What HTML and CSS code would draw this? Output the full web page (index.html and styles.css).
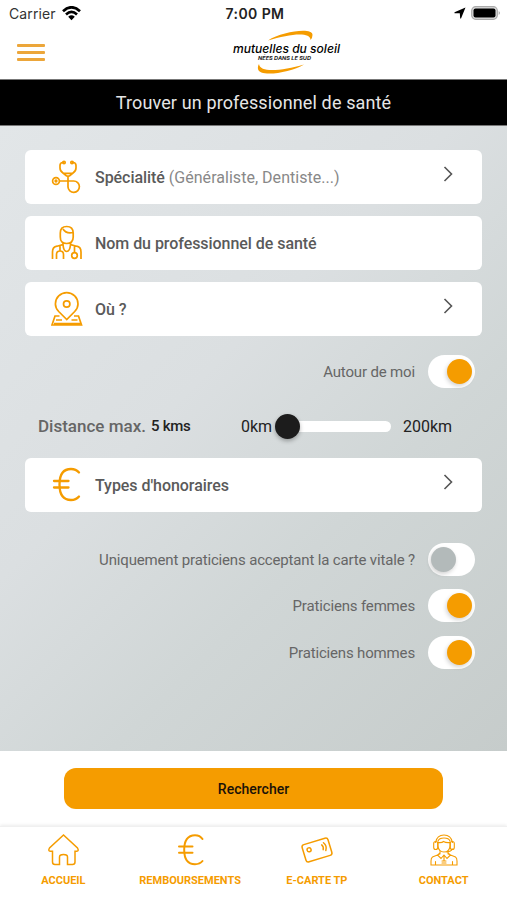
FILE: index.html
```
<!DOCTYPE html>
<html lang="fr">
<head>
    <meta charset="UTF-8">
    <title>Trouver un professionnel de santé</title>
    <link rel="stylesheet" href="styles.css">
</head>
<body>
<div class="status">
    <div class="carrier">
        <span>Carrier</span>
        <svg width="19" height="15" viewBox="0 0 19 15">
            <path d="M1 5.2Q9.5 -2.6 18 5.2M4 8.4Q9.5 3.4 15 8.4" fill="none" stroke="#000" stroke-width="2.7"/>
            <path d="M6.2 10.7Q9.5 7.8 12.8 10.7L9.5 14.2z"/>
        </svg>
    </div>
    <span class="time">7:00 PM</span>
    <div class="battery">
        <svg width="12" height="12" viewBox="0 0 12 12"><path d="M11.5 .5L.5 5.2L.5 6.2L5.8 6.2L6.2 11.5H7z"/></svg>
        <svg width="30" height="14" viewBox="0 0 30 14">
            <rect x=".7" y=".7" width="25.6" height="12.6" rx="4" fill="#ddd" stroke="#aaa" stroke-width="1.2"/>
            <rect x="2.5" y="2.500" width="22" height="9" rx="2"/>
            <path d="M27.7 5Q30.2 7 27.7 9z" fill="#aaa"/>
        </svg>
    </div>
</div>

<header class="header">
    <div class="menu">
        <span></span>
        <span></span>
        <span></span>
    </div>
    <svg class="logo" width="110" height="46" viewBox="0 0 110 46">
        <path d="M37 12.500C51 3.500 82 -1 81.500 7Q81.500 10 79.500 12C80 3.500 59 5.500 37 12.500z" fill="#f59c00"/>
        <path d="M73 36.500C59 45 28 49.500 27 41Q26.500 38 28 36C29 45.500 52 42.500 73 36.500z" fill="#f59c00"/>
        <text class="logo-name" x="2" y="24.500" textLength="107" lengthAdjust="spacingAndGlyphs">mutuelles du soleil</text>
        <text class="logo-sub" x="27" y="32" textLength="53" lengthAdjust="spacingAndGlyphs">NÉES DANS LE SUD</text>
    </svg>
</header>

<h1 class="title">Trouver un professionnel de santé</h1>

<main class="main">
    <div class="card">
        <svg class="icon" width="32" height="36" viewBox="0 0 32 36">
            <path d="M13 3.500H12Q9 3.500 9 6.500V9Q9 12 12 14L15.500 17H18.500L22 14Q25 12 25 9V6.500Q25 3.500 22 3.500H21M12 14.300H22M17 17V28A5.700 5.700 0 1 0 22.700 22H9"/>
            <circle cx="13" cy="3.500" r="1.200"/>
            <circle cx="21" cy="3.500" r="1.200"/>
            <circle cx="5" cy="22" r="3.400"/>
            <circle cx="5" cy="22" r=".8"/>
        </svg>
        <p>Spécialité <span>(Généraliste, Dentiste...)</span></p>
        <svg class="arrow" width="10" height="16" viewBox="0 0 10 16"><path d="M1.500 1L8.500 8L1.500 15"/></svg>
    </div>
    <div class="card">
        <svg class="icon" width="32" height="36" viewBox="0 0 32 36">
            <path d="M9.300 8Q9.300 1.500 15.700 1.500T22.200 8V12Q22.200 18.500 15.700 18.500T9.300 12zM12 4Q15 9 22 7.500"/>
            <path d="M1.500 34V27Q1.500 22 6 21.200L12 19.500V17.500M19.500 17.500V19.500L25.500 21.200Q30 22 30 27V34M12 19.500Q12.500 26.500 15.700 26.500T19.500 19.500M9 20.500V26M5.500 34V29.500Q5.500 26 9 26T12.500 29.500V34M23.500 21V27.500"/>
            <circle cx="23.500" cy="30.500" r="2.800"/>
        </svg>
        <p>Nom du professionnel de santé</p>
    </div>
    <div class="card">
        <svg class="icon" width="32" height="36" viewBox="0 0 32 36">
            <path d="M15.700 28.500L7.700 20.500Q4.400 17 4.400 12.900A11.300 11.300 0 0 1 27 12.900Q27 17 23.700 20.500z"/>
            <circle cx="15.700" cy="13" r="3.200"/>
            <path d="M8.500 25H4L1 34H30.500L27.500 25H23M5 29H11M20.500 29H26.500M3 32.500H29"/>
        </svg>
        <p>Où ?</p>
        <svg class="arrow" width="10" height="16" viewBox="0 0 10 16"><path d="M1.500 1L8.500 8L1.500 15"/></svg>
    </div>

    <div class="option around">
        <p>Autour de moi</p>
        <div class="switch on"><i></i></div>
    </div>

    <div class="distance">
        <p class="max">Distance max.</p>
        <p class="value">5 kms</p>
        <p class="from">0km</p>
        <div class="slider"><i></i></div>
        <p class="to">200km</p>
    </div>

    <div class="card">
        <svg class="icon" width="32" height="36" viewBox="0 0 32 36">
            <path class="euro" d="M28 5.500Q25 2 20 2C12 2 8.500 8 8.500 17.500S12 33 20 33Q25 33 28 29.500M3 14H17.500M3 20.500H17.500"/>
        </svg>
        <p>Types d'honoraires</p>
        <svg class="arrow" width="10" height="16" viewBox="0 0 10 16"><path d="M1.500 1L8.500 8L1.500 15"/></svg>
    </div>

    <div class="options">
        <div class="option">
            <p>Uniquement praticiens acceptant la carte vitale ?</p>
            <div class="switch"><i></i></div>
        </div>
        <div class="option">
            <p>Praticiens femmes</p>
            <div class="switch on"><i></i></div>
        </div>
        <div class="option">
            <p>Praticiens hommes</p>
            <div class="switch on"><i></i></div>
        </div>
    </div>
</main>

<div class="search">
    <button class="btn">Rechercher</button>
</div>

<nav class="tabs">
    <div class="tab">
        <svg width="32" height="32" viewBox="0 0 32 32">
            <path d="M16.500 1L2.500 14Q.8 17 3.300 17.300H5.500V28Q5.500 30.500 8 30.500H12.500V23Q12.500 20.500 16.500 20.500T20.500 23V30.500H25.500Q28 30.500 28 28V17.300H29.700Q32.200 17 30.500 14z"/>
        </svg>
        <span>ACCUEIL</span>
    </div>
    <div class="tab">
        <svg width="32" height="32" viewBox="0 0 32 32">
            <path class="bold" d="M28.500 5Q26 1.200 21 1.200C13.500 1.200 10.200 7 10.200 15.700S13.500 30.200 21 30.200Q26 30.200 28.500 27M5 12.500H18.500M5 18.700H18.500"/>
        </svg>
        <span>REMBOURSEMENTS</span>
    </div>
    <div class="tab">
        <svg width="32" height="32" viewBox="0 0 32 32">
            <g transform="rotate(-17 16 16)">
                <rect x="2.500" y="7" width="27" height="18" rx="2.500"/>
                <circle cx="8.500" cy="13.500" r="2"/>
                <path d="M22 12.500Q23.500 15 22 17.500M24.300 11Q27 15 24.300 19"/>
            </g>
        </svg>
        <span>E-CARTE TP</span>
    </div>
    <div class="tab">
        <svg class="thin" width="32" height="32" viewBox="0 0 32 32">
            <path d="M7.500 8.500Q9 1 16 1T24.500 8.500M10 8V12Q10.500 18 16 18T22 12V8M10 8.500Q14 9 15.500 7.500Q18 9 22 8.500M10 7Q11 4 16 4T22 7M24.500 15Q22.500 18 18 18"/>
            <rect x="5.700" y="7.500" width="4" height="8" rx="2"/>
            <rect x="22.300" y="7.500" width="4" height="8" rx="2"/>
            <path d="M12 17.500V20L4.500 23Q3 24 3 27V31H29V27Q29 24 27.500 23L20 20V17.500M12 19L9.500 21L13 24.500L16 21L19 24.500L22.500 21L20 19M7.500 27.500V31M24.500 27.500V31M14 27H18M14 29H18M16 21V27"/>
        </svg>
        <span>CONTACT</span>
    </div>
</nav>
</body>
</html>
```

FILE: styles.css
```
*{
    margin: 0;
    padding: 0;
    box-sizing: border-box;
}
body{
    height: 900px;
    background: #fff;
    font-family: Roboto, sans-serif;
    overflow: hidden;
}
svg{
    display: block;
    flex: none;
}
p, span{
    white-space: nowrap;
}
.status{
    display: grid;
    grid-template-columns: 1fr auto 1fr;
    align-items: center;
    height: 28px;
    padding: 0 6px 2px 9px;
    font-family: Inter, sans-serif;
}
.carrier{
    display: flex;
    align-items: center;
    gap: 6px;
    font-size: 14px;
    letter-spacing: .1px;
    color: #333;
}
.time{
    font-size: 14px;
    font-weight: 600;
    letter-spacing: .4px;
    color: #222;
}
.battery{
    display: flex;
    justify-content: flex-end;
    align-items: center;
    gap: 5px;
}
.header{
    display: flex;
    height: 51px;
    padding-left: 17px;
}
.menu{
    display: flex;
    flex-direction: column;
    gap: 4.2px;
    width: 28px;
    padding-top: 16px;
}
.menu span{
    height: 3px;
    border-radius: 1px;
    background: #eca63a;
}
.logo{
    margin-left: 186px;
}
.logo-name{
    font: italic 500 12px Inter, sans-serif;
}
.logo-sub{
    font: italic bold 5px Inter, sans-serif;
    fill: #222;
}
.title{
    height: 47px;
    border-top: 1px solid #777;
    border-bottom: 1px solid #777;
    background: #000;
    color: #e6e6e6;
    font-size: 18px;
    font-weight: 400;
    letter-spacing: .13px;
    line-height: 45px;
    text-align: center;
}
.main{
    height: 625px;
    padding: 24px 25px 0;
    background: linear-gradient(135deg, #e2e6e8 0%, #dbdfe1 40%, #d0d6d6 65%, #c6cccb 100%);
}
.card{
    display: flex;
    align-items: center;
    height: 54px;
    margin-bottom: 12px;
    padding: 0 29px 0 26px;
    border-radius: 6px;
    background: #fff;
    color: #5a5a5a;
    font-size: 16px;
    font-weight: 500;
    letter-spacing: -.05px;
}
.card p span{
    color: #888;
    font-weight: 400;
    letter-spacing: .03px;
}
.icon{
    margin-right: 12px;
    fill: none;
    stroke: #f59c00;
    stroke-width: 1.7;
}
.euro{
    stroke-width: 2.3;
    stroke-linecap: round;
}
.arrow{
    margin: 0 0 7px auto;
    fill: none;
    stroke: #555;
    stroke-width: 1.6;
}
.option{
    display: flex;
    justify-content: flex-end;
    align-items: center;
    gap: 13px;
    height: 32px;
    padding-right: 7px;
    color: #666;
    font-size: 15px;
    letter-spacing: -.16px;
}
.option p{
    padding-top: 1px;
}
.around{
    margin-top: 19px;
}
.switch{
    display: flex;
    width: 47px;
    height: 33px;
    padding: 4px 3px;
    border-radius: 17px;
    background: #fff;
}
.switch i{
    width: 25px;
    height: 25px;
    border-radius: 50%;
    background: #b3baba;
    box-shadow: -1px 2px 4px rgba(0,0,0,.18);
}
.on{
    justify-content: flex-end;
}
.on i{
    background: #f59c00;
}
.distance{
    display: flex;
    align-items: center;
    height: 32px;
    margin: 23px 0 16px;
    padding-left: 13px;
    color: #222;
    font-size: 16px;
}
.distance .max{
    width: 113px;
    color: #666;
    font-size: 17px;
    font-weight: 500;
}
.value{
    width: 90px;
    font-size: 15px;
    font-weight: 500;
    letter-spacing: -.3px;
}
.from{
    width: 34px;
}
.slider{
    display: flex;
    align-items: center;
    width: 116px;
    height: 11px;
    margin-right: 12px;
    border-radius: 6px;
    background: #fff;
}
.slider i{
    flex: none;
    width: 25px;
    height: 25px;
    border-radius: 50%;
    background: #1c1c1c;
    box-shadow: 0 2px 4px rgba(0,0,0,.3);
}
.options{
    display: flex;
    flex-direction: column;
    gap: 14.5px;
    padding-top: 19px;
}
.search{
    height: 75px;
    padding: 17px 64px 0;
}
.btn{
    display: block;
    width: 379px;
    height: 41px;
    border: none;
    border-radius: 12px;
    background: #f59c00;
    color: #1a1208;
    font: 500 14px Roboto, sans-serif;
}
.tabs{
    display: grid;
    grid-template-columns: repeat(4, 1fr);
    height: 74px;
    padding-top: 7px;
    border-top: 1px solid #f0f0f0;
    box-shadow: 0 -1px 3px rgba(0,0,0,.08);
}
.tab{
    display: flex;
    flex-direction: column;
    align-items: center;
    gap: 8px;
    color: #f59c00;
    font-size: 11px;
    font-weight: 700;
}
.tab svg{
    fill: none;
    stroke: #f59c00;
    stroke-width: 1.5;
    stroke-linecap: round;
    overflow: visible;
}
.tab .bold{
    stroke-width: 2;
}
.tab .thin{
    stroke-width: 1.1;
}
```
